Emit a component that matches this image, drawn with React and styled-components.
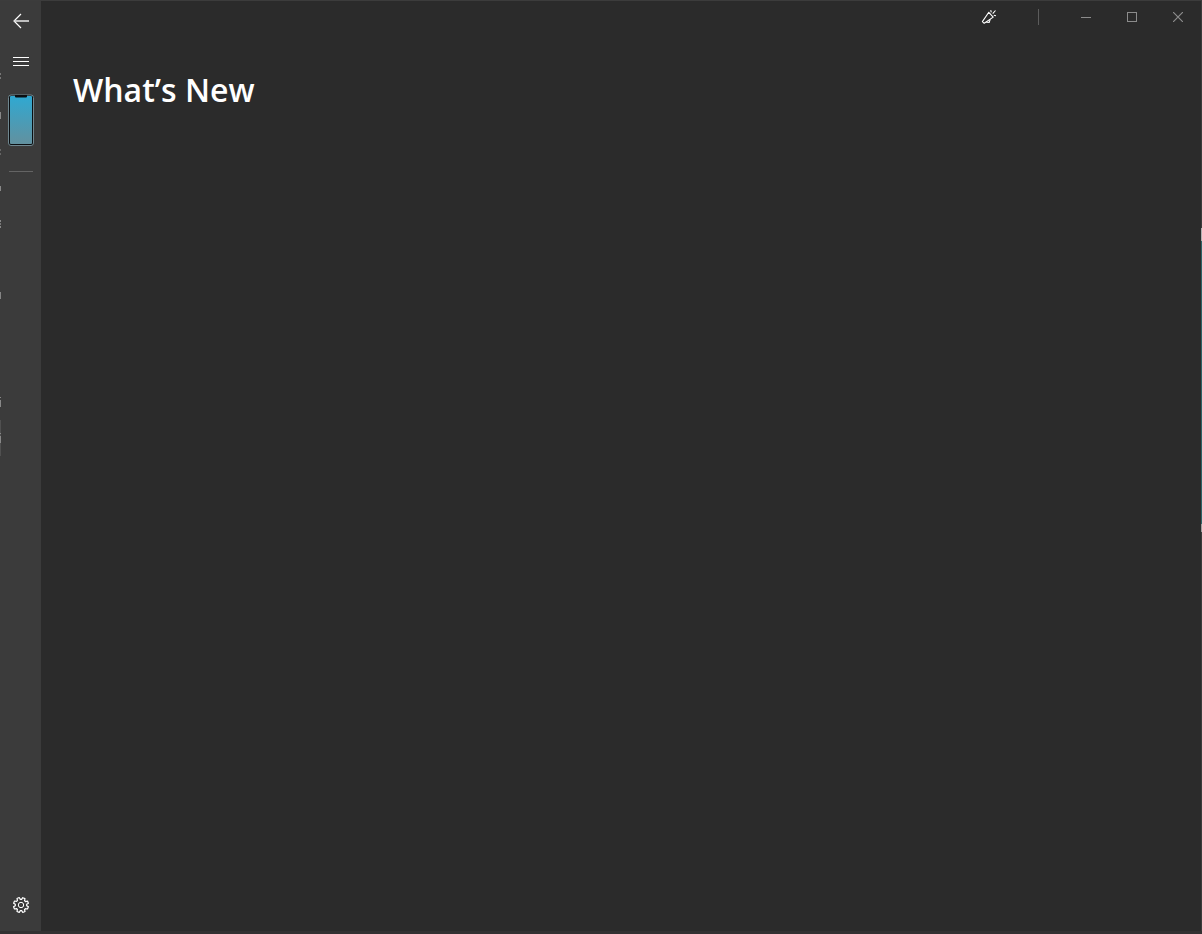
import React from "react";
import styled, { createGlobalStyle } from "styled-components";

const App = () => (
  <>
    <GlobalStyle />
    <Window>
      <Sidebar aria-label="Main">
        <NavButton aria-label="Back">
          <svg width="16" height="16" viewBox="0 0 16 16">
            <path d="M8 1L1 8l7 7" fill="none" stroke="#fff" strokeWidth="1.2" />
            <path d="M1 8h15" stroke="#e0e0e0" strokeWidth="1.6" />
          </svg>
        </NavButton>
        <NavButton aria-label="Menu">
          <svg width="16" height="9" viewBox="0 0 16 9" shapeRendering="crispEdges">
            <path d="M0 .5h16M0 4.5h16M0 8.5h16" stroke="#fff" />
          </svg>
        </NavButton>
        <PhoneButton aria-label="Phone">
          <Phone />
        </PhoneButton>
        <Divider />
        <SettingsButton aria-label="Settings">
          <Gear />
        </SettingsButton>
      </Sidebar>
      <Main>
        <TitleBar>
          <CaptionButton aria-label="Announcements">
            <Megaphone />
          </CaptionButton>
          <Separator />
          <CaptionButton aria-label="Minimize">
            <svg width="10" height="10" viewBox="0 0 10 10" shapeRendering="crispEdges">
              <path d="M0 5.5h10" stroke="#8c8c8c" />
            </svg>
          </CaptionButton>
          <CaptionButton aria-label="Maximize">
            <svg width="10" height="10" viewBox="0 0 10 10" shapeRendering="crispEdges">
              <path d="M.5 .5h9v9h-9z" fill="none" stroke="#8c8c8c" />
            </svg>
          </CaptionButton>
          <CaptionButton aria-label="Close">
            <svg width="10" height="10" viewBox="0 0 10 10">
              <path d="M0 0l10 10M10 0L0 10" stroke="#8c8c8c" strokeWidth="1.2" />
            </svg>
          </CaptionButton>
        </TitleBar>
        <Title>What’s New</Title>
      </Main>
      <Edge />
    </Window>
  </>
);

export default App;

const Phone = () => (
  <svg width="26" height="52" viewBox="0 0 26 52">
    <defs>
      <linearGradient id="screen" x1="0" y1="0" x2="0" y2="1">
        <stop offset="0" stopColor="#2fa9d2" />
        <stop offset="1" stopColor="#62919f" />
      </linearGradient>
    </defs>
    <rect x=".5" y="1" width="25" height="50.5" rx="2.5" fill="#0b0f12" stroke="#6f868e" />
    <rect x="2" y="2" width="22" height="48" rx="1" fill="url(#screen)" />
    <path d="M7 1h12v1.5q0 1-1 1H8q-1 0-1-1z" fill="#0b0f12" />
  </svg>
);

// eight teeth around an open ring, with a notch at the top
const Gear = () => (
  <svg width="18" height="18" viewBox="-1 -1 18 18" fill="none" stroke="#fff">
    <path
      d="M6.8.6h2.4l.4 2 1.2.5 1.7-1.2 1.7 1.7L13 5.2l.5 1.2 2 .4v2.4l-2 .4-.5 1.2 1.2 1.7-1.7 1.7-1.7-1.2-1.2.5-.4 2H6.8l-.4-2-1.2-.5-1.7 1.2-1.7-1.7L3 10.800l-.5-1.2-2-.4V6.8l2-.4.5-1.2-1.2-1.7 1.7-1.7 1.7 1.2 1.2-.5z"
      strokeWidth="1.2"
      strokeLinejoin="round"
      transform="rotate(22.5 8 8)"
    />
    <circle cx="8" cy="8" r="2.7" />
  </svg>
);

const Megaphone = () => (
  <svg width="16" height="16" viewBox="0 0 16 16" fill="none" stroke="#fff" strokeWidth="1.1">
    <path d="M7.8 3.3l4.4 4.8L3.2 14.3 1.4 12.600z" strokeLinejoin="round" />
    <path d="M5.2 13.2l3 .2 1-3" />
    <path d="M10.3 3.4L9.7 1.2M11.7 4.7l2.8-3.2M12.8 6.3l2.2.5" />
  </svg>
);

const GlobalStyle = createGlobalStyle`
  * {
    box-sizing: border-box;
  }
  body {
    margin: 0;
    background: #2b2b2b;
    font-family: "Open Sans", "Noto Sans", sans-serif;
  }
`;

const Window = styled.div`
  display: flex;
  min-height: 100vh;
  border-top: 1px solid #3c3c3c;
  border-bottom: 3px solid #333132;
`;

// specks of the window behind show along the left border
const specks = [
  [72, 2, "#777"],
  [76, 2, "#777"],
  [111, 7, "#888"],
  [148, 2, "#666"],
  [152, 2, "#666"],
  [185, 5, "#888"],
  [219, 2, "#888"],
  [222, 2, "#777"],
  [225, 2, "#888"],
  [291, 7, "#858585"],
  [396, 1, "#888"],
  [399, 7, "#888"],
  [432, 1, "#888"],
  [435, 7, "#888"],
  [419, 36, "#505050"]
].map(
  ([top, height, color]) =>
    `linear-gradient(${color}, ${color}) 0 ${top}px / 1px ${height}px no-repeat`
);

const Sidebar = styled.nav`
  display: flex;
  flex: 0 0 41px;
  flex-direction: column;
  align-items: center;
  background: ${specks.join(", ")}, #3b3b3b;
`;

const Edge = styled.div`
  flex: 0 0 1px;
  background: linear-gradient(
    #3c3c3c 227px,
    #b0b0b0 227px 240px,
    #2f6468 240px 523px,
    #a0a0a0 523px 531px,
    #3c3c3c 531px
  );
`;

const Button = styled.button`
  display: flex;
  align-items: center;
  justify-content: center;
  padding: 0;
  border: 0;
  background: none;
  color: #fff;

  svg {
    display: block;
  }
`;

const NavButton = styled(Button)`
  width: 40px;
  height: 40px;
`;

const PhoneButton = styled(Button)`
  width: 40px;
  height: 78px;
`;

const SettingsButton = styled(NavButton)`
  margin-top: auto;
  margin-bottom: 6px;
`;

const Divider = styled.hr`
  width: 24px;
  height: 1px;
  margin: 12px 0 0;
  border: 0;
  background: #646464;
`;

const Main = styled.main`
  flex: 1;
  min-width: 0;
`;

const TitleBar = styled.header`
  display: flex;
  align-items: center;
  justify-content: flex-end;
  height: 32px;
`;

const Separator = styled.span`
  width: 1px;
  height: 16px;
  margin: 0 24px 0 26px;
  background: #5c5c5c;
`;

const CaptionButton = styled(Button)`
  width: 46px;
  height: 32px;
`;

const Title = styled.h1`
  margin: 32px;
  color: #fff;
  font-size: 32px;
  font-weight: 600;
  line-height: 50px;
`;
